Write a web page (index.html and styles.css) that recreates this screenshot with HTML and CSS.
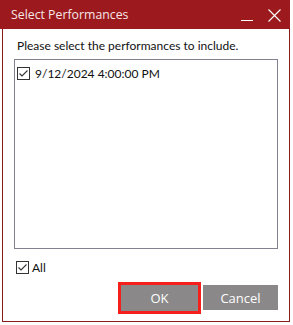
FILE: index.html
```html
<!DOCTYPE html>
<html lang="en">
<head>
    <meta charset="UTF-8">
    <title>Select Performances</title>
    <link rel="stylesheet" href="styles.css">
</head>
<body>
    <div class="window">
        <div class="titlebar">
            <span class="title">Select Performances</span>
            <div class="controls">
                <span class="ctl-min"></span>
                <svg class="ctl-close" width="13" height="13" viewBox="0 0 13 13">
                    <path d="M0.5 0.5 L12.5 12.5 M12.5 0.5 L0.5 12.5" stroke="#fff" stroke-width="1.1" fill="none"/>
                </svg>
            </div>
        </div>

        <div class="content">
            <p class="prompt">Please select the performances to include.</p>

            <div class="listbox">
                <label class="check-row">
                    <svg class="check" width="13" height="13" viewBox="0 0 13 13">
                        <rect x="0.5" y="0.5" width="12" height="12" fill="#fff" stroke="#333"/>
                        <path d="M2.5 6.5 L5 9 L10.5 3.5" stroke="#333" stroke-width="1.1" fill="none"/>
                    </svg>
                    <span>9/12/2024 4:00:00 PM</span>
                </label>
            </div>

            <label class="check-row all-row">
                <svg class="check" width="13" height="13" viewBox="0 0 13 13">
                    <rect x="0.5" y="0.5" width="12" height="12" fill="#fff" stroke="#333"/>
                    <path d="M2.5 6.5 L5 9 L10.5 3.5" stroke="#333" stroke-width="1.1" fill="none"/>
                </svg>
                <span>All</span>
            </label>

            <div class="buttons">
                <div class="focus-ring">
                    <button class="btn btn-ok">OK</button>
                </div>
                <button class="btn btn-cancel">Cancel</button>
            </div>
        </div>
    </div>
</body>
</html>
```

FILE: styles.css
```css
body {
    margin: 0;
    background: #fff;
    font-family: Lato, "Open Sans", sans-serif;
    font-size: 12px;
}

.window {
    width: 290px;
}

.titlebar {
    height: 29px;
    background: #9c1a1e;
    color: #f5e6e6;
    display: flex;
    align-items: center;
    padding-left: 11px;
}

.title {
    font-family: "Open Sans", sans-serif;
    font-size: 12.3px;
}

.controls {
    margin-left: auto;
    display: flex;
    align-items: center;
    height: 29px;
}

.ctl-min {
    width: 12px;
    height: 1px;
    background: #fff;
    margin-top: 11px;
    margin-right: 15px;
}

.ctl-close {
    margin-right: 9px;
    margin-top: 1px;
}

.content {
    margin-left: 2px;
    width: 288px;
    height: 293px;
    box-sizing: border-box;
    border: 1px solid #8b1c1c;
    border-top: none;
    padding: 9px 11px 0 11px;
    background: #fff;
}

.prompt {
    margin: 0 0 0 3px;
    line-height: 16px;
    color: #111;
}

.listbox {
    margin-top: 5px;
    height: 190px;
    box-sizing: border-box;
    border: 1px solid #82818f;
    padding: 6px 2px;
}

.check-row {
    display: flex;
    align-items: center;
    gap: 5px;
    height: 14px;
    color: #111;
}

.check {
    flex: none;
}

.all-row {
    margin-top: 11px;
    margin-left: 2px;
    gap: 3px;
}

.buttons {
    margin-top: 8px;
    display: flex;
    justify-content: flex-end;
    align-items: flex-start;
    gap: 2px;
}

.focus-ring {
    border: 3px solid #f5201c;
    display: flex;
}

.btn {
    border: none;
    background: #8a8889;
    color: #fff;
    font-family: "Open Sans", sans-serif;
    font-size: 13px;
    padding: 0;
    cursor: pointer;
}

.btn-ok {
    width: 77px;
    height: 26px;
}

.btn-cancel {
    width: 75px;
    height: 25px;
    margin-top: 3px;
}
```
